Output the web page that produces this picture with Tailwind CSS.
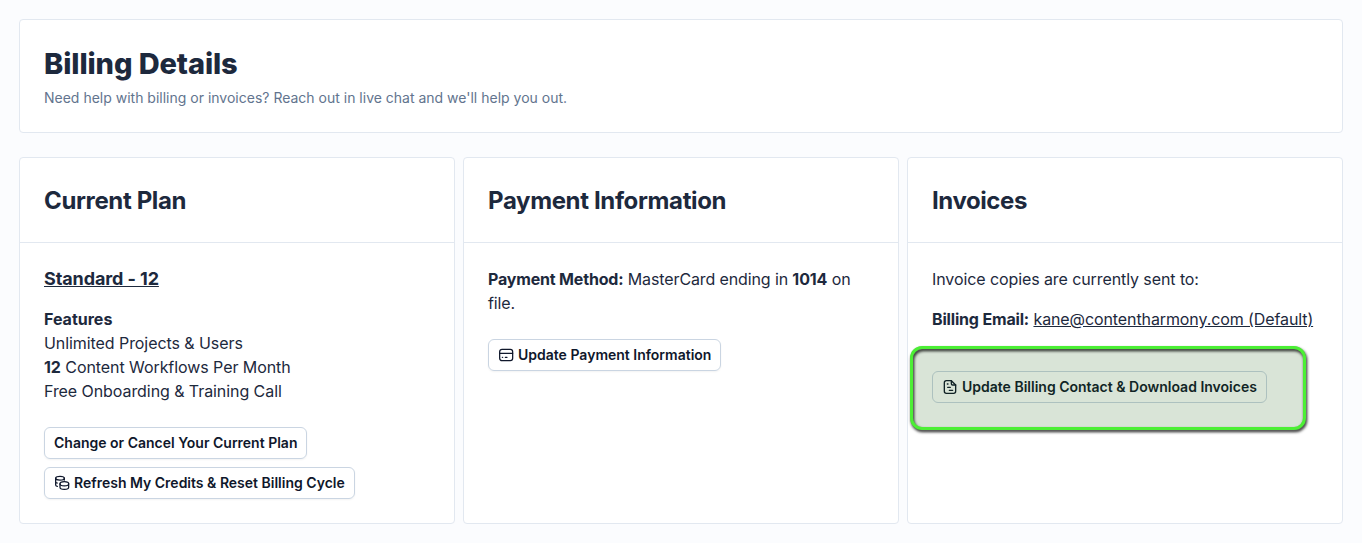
<!DOCTYPE html>
<html lang="en">
  <head>
    <meta charset="UTF-8" />
    <meta name="viewport" content="width=device-width, initial-scale=1.0" />
    <title>Billing Details</title>
    <script src="https://cdn.jsdelivr.net/npm/@tailwindcss/browser@4"></script>
  </head>
  <body class="bg-[#fbfcfe] font-['Inter',sans-serif] text-slate-800 h-[543px] overflow-hidden pt-[19px] pl-[19px]">
    <!-- Header -->
    <div class="w-[1324px] h-[114px] bg-white border border-slate-200 rounded px-6 pt-[26px]">
      <h1 class="text-[29px] leading-9 font-extrabold tracking-[-0.1px]">Billing Details</h1>
      <p class="mt-[6px] text-sm leading-5 text-slate-500">
        Need help with billing or invoices? Reach out in live chat and we'll help you out.
      </p>
    </div>

    <div class="mt-6 w-[1324px] h-[367px] grid grid-cols-3 gap-2">
      <!-- Current plan -->
      <div class="bg-white border border-slate-200 rounded">
        <div class="h-[85px] px-6 pt-px flex items-center border-b border-slate-200">
          <h2 class="text-2xl font-bold tracking-[-0.36px]">Current Plan</h2>
        </div>
        <div class="px-6 pt-[22px]">
          <h3 class="text-lg leading-7 font-bold underline tracking-[-0.1px]">Standard - 12</h3>
          <div class="mt-[14px] mb-6 leading-6 tracking-[-0.07px]">
            <p class="font-bold tracking-normal">Features</p>
            <p>Unlimited Projects &amp; Users</p>
            <p><b>12</b> Content Workflows Per Month</p>
            <p>Free Onboarding &amp; Training Call</p>
          </div>
          <div class="flex flex-col items-start gap-2">
            <button class="h-8 px-[9px] border border-slate-300 rounded-md shadow-xs text-sm font-semibold text-slate-900">Change or Cancel Your Current Plan</button>
            <button class="h-8 px-[9px] flex items-center gap-1 border border-slate-300 rounded-md shadow-xs text-sm font-semibold text-slate-900">
              <svg class="w-4 h-4" viewBox="0 0 24 24" fill="none" stroke="currentColor" stroke-width="1.9" stroke-linecap="round">
                <ellipse cx="9" cy="4.8" rx="6.5" ry="2.8" />
                <path d="M2.5 4.800v10.200c0 1 .9 1.700 2.500 2M2.500 10c0 1 .9 1.700 2.500 2M15.500 4.800v2.700" />
                <ellipse cx="15.500" cy="13" rx="6.500" ry="3.200" />
                <path d="M9 13v5.500c0 1.800 3 3.200 6.500 3.200s6.500-1.400 6.500-3.200V13" />
              </svg>
              Refresh My Credits &amp; Reset Billing Cycle
            </button>
          </div>
        </div>
      </div>

      <!-- Payment information -->
      <div class="bg-white border border-slate-200 rounded">
        <div class="h-[85px] px-6 pt-px flex items-center border-b border-slate-200">
          <h2 class="text-2xl font-bold tracking-[-0.36px]">Payment Information</h2>
        </div>
        <div class="px-6 pt-6">
          <p class="leading-6 tracking-[-0.12px]"><b class="tracking-[-0.18px]">Payment Method:</b> MasterCard ending in <b>1014</b> on file.</p>
          <button class="mt-6 h-8 px-[9px] flex items-center gap-1 border border-slate-300 rounded-md shadow-xs text-sm font-semibold text-slate-900">
            <svg class="w-4 h-4" viewBox="0 0 24 24" fill="none" stroke="currentColor" stroke-width="1.9" stroke-linecap="round">
              <rect x="2.500" y="3.500" width="19.500" height="17" rx="3.500" />
              <path d="M2.500 9.500h19.500M6.500 15.500h.5M11 15.500h2.500" />
            </svg>
            Update Payment Information
          </button>
        </div>
      </div>

      <!-- Invoices -->
      <div class="relative bg-white border border-slate-200 rounded">
        <div class="h-[85px] px-6 pt-px flex items-center border-b border-slate-200">
          <h2 class="text-2xl font-bold tracking-[-0.42px]">Invoices</h2>
        </div>
        <div class="px-6 pt-6 whitespace-nowrap">
          <p class="leading-6 tracking-[-0.09px]">Invoice copies are currently sent to:</p>
          <p class="mt-4 leading-6 tracking-[-0.1px]"><b class="tracking-[-0.17px]">Billing Email:</b> <a class="underline">kane@contentharmony.com (Default)</a></p>
          <button class="mt-10 h-8 px-[9px] flex items-center gap-1 border border-slate-300 rounded-md text-sm font-semibold text-slate-900">
            <svg class="w-4 h-4" viewBox="0 0 24 24" fill="none" stroke="currentColor" stroke-width="2" stroke-linecap="round" stroke-linejoin="round">
              <path d="M14 2.500H6.500a3 3 0 0 0-3 3v13a3 3 0 0 0 3 3h11a3 3 0 0 0 3-3V9z" />
              <path d="M14 2.500V7a2 2 0 0 0 2 2h4.500M8.500 12.500h4M11 17h5M8 7.500h1" />
            </svg>
            Update Billing Contact &amp; Download Invoices
          </button>
        </div>
        <!-- Highlight over the invoices button -->
        <div class="absolute left-[2px] top-[188px] w-[396px] h-[84px] rounded-xl bg-[#1f6014]/17"></div>
        <div class="absolute left-[2px] top-[188px] w-[396px] h-[84px] rounded-xl border-[3px] border-[#4cef35] drop-shadow-[1.5px_2px_1.5px_rgba(0,0,0,0.9)]"></div>
      </div>
    </div>
  </body>
</html>
